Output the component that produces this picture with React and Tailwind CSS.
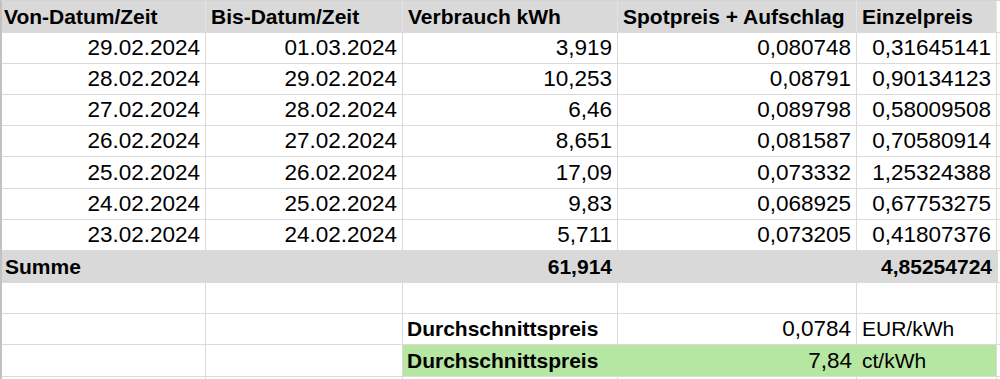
import React from 'react';

const widths = ['w-[204px]', 'w-[197px]', 'w-[215px]', 'w-[239px]', 'w-[140px]', 'flex-1'];

const rows = [
  ['29.02.2024', '01.03.2024', '3,919', '0,080748', '0,31645141'],
  ['28.02.2024', '29.02.2024', '10,253', '0,08791', '0,90134123'],
  ['27.02.2024', '28.02.2024', '6,46', '0,089798', '0,58009508'],
  ['26.02.2024', '27.02.2024', '8,651', '0,081587', '0,70580914'],
  ['25.02.2024', '26.02.2024', '17,09', '0,073332', '1,25324388'],
  ['24.02.2024', '25.02.2024', '9,83', '0,068925', '0,67753275'],
  ['23.02.2024', '24.02.2024', '5,711', '0,073205', '0,41807376'],
];

const rowHeights = ['h-[31px]', 'h-[31px]', 'h-[31px]', 'h-[31px]', 'h-[32px]', 'h-[31px]', 'h-[31px]'];

const Cell = ({ w, className = '', children }) => (
  <div className={`${w} shrink-0 h-full flex items-center border-r border-[#dadada] px-[5px] ${className}`}>
    {children}
  </div>
);

const App = () => {
  return (
    <div
      className="w-[1000px] h-[379px] overflow-hidden bg-white text-black border-t border-l-2 border-t-[#d4d4d4] border-l-[#c2c2c2]"
      style={{ fontFamily: '"Liberation Sans", Arial, sans-serif' }}
    >
      {/* Kopfzeile */}
      <div className="flex h-[32px] bg-[#d9d9d9] border-b border-[#dadada] text-[21px] font-bold">
        <Cell w={widths[0]} className="border-[#e4e4e4] pl-[2px]">Von-Datum/Zeit</Cell>
        <Cell w={widths[1]} className="border-[#e4e4e4]">Bis-Datum/Zeit</Cell>
        <Cell w={widths[2]} className="border-[#e4e4e4]">Verbrauch kWh</Cell>
        <Cell w={widths[3]} className="border-[#e4e4e4]">Spotpreis + Aufschlag</Cell>
        <Cell w={widths[4]} className="border-[#e4e4e4]">Einzelpreis</Cell>
        <div className="flex-1 bg-white" />
      </div>

      {/* Daten */}
      {rows.map((r, i) => (
        <div key={i} className={`flex ${rowHeights[i]} border-b border-[#dadada] text-[22.5px]`}>
          {r.map((v, j) => (
            <Cell key={j} w={widths[j]} className="justify-end">
              {v}
            </Cell>
          ))}
          <div className="flex-1" />
        </div>
      ))}

      {/* Summe */}
      <div className="flex h-[32px] border-b border-[#dadada] text-[21px] font-bold">
        <div className="w-[856px] shrink-0 h-full bg-[#d9d9d9] flex items-center border-r border-[#d9d9d9]">
          <div className="w-[400px] pl-[3px]">Summe</div>
          <div className="w-[215px] text-right pr-[5px]">61,914</div>
        </div>
        <div className="w-[140px] shrink-0 h-full bg-[#d9d9d9] flex items-center justify-end pr-[5px] border-r border-[#dadada]">
          4,85254724
        </div>
        <div className="flex-1" />
      </div>

      {/* Leerzeile */}
      <div className="flex h-[31px] border-b border-[#dadada]">
        {widths.slice(0, 5).map((w, j) => (
          <Cell key={j} w={w} />
        ))}
        <div className="flex-1" />
      </div>

      {/* Durchschnitt EUR */}
      <div className="flex h-[31px] border-b border-[#dadada] text-[22.5px]">
        <Cell w={widths[0]} />
        <Cell w={widths[1]} />
        <Cell w={widths[2]} className="font-bold text-[21px] pl-[4px]">Durchschnittspreis</Cell>
        <Cell w={widths[3]} className="justify-end">0,0784</Cell>
        <Cell w={widths[4]} className="text-[21px]">EUR/kWh</Cell>
        <div className="flex-1" />
      </div>

      {/* Durchschnitt ct */}
      <div className="flex h-[32px] border-b border-[#dadada] text-[22.5px]">
        <Cell w={widths[0]} />
        <Cell w={widths[1]} />
        <div className="w-[594px] shrink-0 h-full bg-[#b5e6a2] flex items-center border-r border-[#dadada]">
          <div className="w-[215px] pl-[4px] font-bold text-[21px]">Durchschnittspreis</div>
          <div className="w-[239px] text-right pr-[5px]">7,84</div>
          <div className="pl-[5px] text-[21px]">ct/kWh</div>
        </div>
        <div className="flex-1" />
      </div>
      <div className="flex h-[4px]">
        <Cell w={widths[0]} />
        <Cell w={widths[1]} />
        <Cell w={widths[2]} />
        <Cell w={widths[3]} />
        <Cell w={widths[4]} />
      </div>
    </div>
  );
};

export default App;
